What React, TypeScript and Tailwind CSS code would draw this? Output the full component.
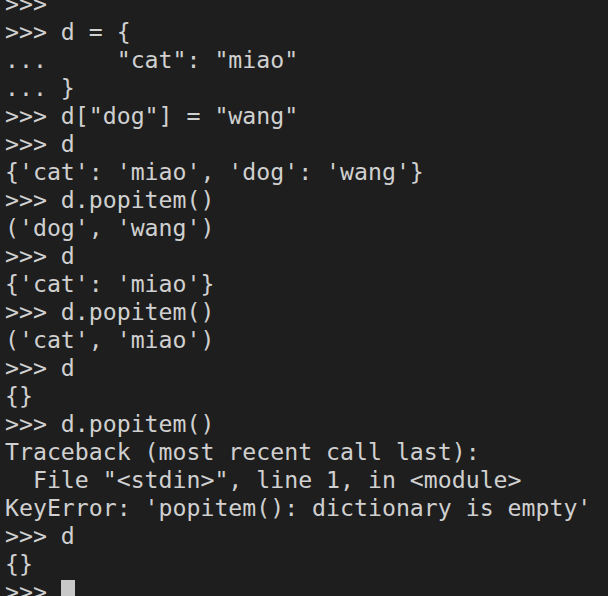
const lines = [
  ">>>",
  '>>> d = {',
  '...     "cat": "miao"',
  "... }",
  '>>> d["dog"] = "wang"',
  ">>> d",
  "{'cat': 'miao', 'dog': 'wang'}",
  ">>> d.popitem()",
  "('dog', 'wang')",
  ">>> d",
  "{'cat': 'miao'}",
  ">>> d.popitem()",
  "('cat', 'miao')",
  ">>> d",
  "{}",
  ">>> d.popitem()",
  "Traceback (most recent call last):",
  '  File "<stdin>", line 1, in <module>',
  "KeyError: 'popitem(): dictionary is empty'",
  ">>> d",
  "{}",
];

export default function App() {
  return (
    <div className="h-[596px] w-[608px] overflow-hidden bg-[#1e1e1e] text-[#d0d0d0]">
      <pre
        className="mt-[-10px] pl-[5px] text-[23.2px] leading-[28px]"
        style={{ fontFamily: '"DejaVu Sans Mono", monospace' }}
      >
        {lines.map((l, i) => (
          <div key={i} className="h-[28px] whitespace-pre">
            {l || " "}
          </div>
        ))}
        <div className="flex h-[28px] items-start whitespace-pre">
          <span>{">>> "}</span>
          <span className="mt-[2px] inline-block h-[22px] w-[14px] bg-[#c8c8c8]" />
        </div>
      </pre>
    </div>
  );
}
